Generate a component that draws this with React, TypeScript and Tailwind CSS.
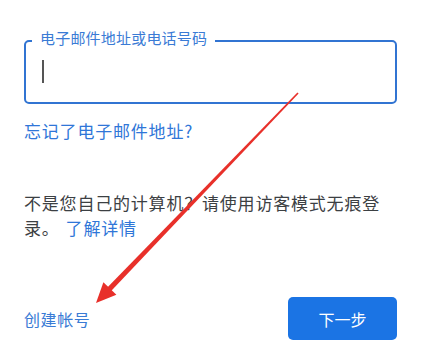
import React from 'react';

const font = { fontFamily: '"Noto Sans CJK SC", "Noto Sans", sans-serif' };

function Arrow() {
  // red annotation arrow drawn over the form
  const top = [298, 93];
  const tip = [96, 303];
  const dx = top[0] - tip[0];
  const dy = top[1] - tip[1];
  const len = Math.hypot(dx, dy);
  const u = [dx / len, dy / len];
  const n = [-u[1], u[0]];
  const headLen = 20;
  const headHalf = 9;
  const base = [tip[0] + u[0] * headLen, tip[1] + u[1] * headLen];
  const shaftEnd = [tip[0] + u[0] * (headLen - 2), tip[1] + u[1] * (headLen - 2)];
  const p = (x: number, y: number) => `${x.toFixed(1)},${y.toFixed(1)}`;
  const shaft = [
    p(top[0] + n[0] * 0.8, top[1] + n[1] * 0.8),
    p(top[0] - n[0] * 0.8, top[1] - n[1] * 0.8),
    p(shaftEnd[0] - n[0] * 2.6, shaftEnd[1] - n[1] * 2.6),
    p(shaftEnd[0] + n[0] * 2.6, shaftEnd[1] + n[1] * 2.6),
  ].join(' ');
  const head = [
    p(tip[0], tip[1]),
    p(base[0] + n[0] * headHalf, base[1] + n[1] * headHalf),
    p(base[0] - n[0] * headHalf, base[1] - n[1] * headHalf),
  ].join(' ');
  return (
    <svg className="pointer-events-none absolute left-0 top-0" width="422" height="359" viewBox="0 0 422 359">
      <polygon points={shaft} fill="#e8302a" />
      <polygon points={head} fill="#e8302a" />
    </svg>
  );
}

export default function App() {
  return (
    <div className="relative h-[359px] w-[422px] overflow-hidden bg-white pl-6 pr-[25px] pt-[40px]" style={font}>
      <div className="relative h-[64px] rounded-[5px] border-2 border-[#3174d2]">
        <span className="absolute -top-[14px] left-[6px] bg-white px-[8px] text-[15px] leading-[20px] tracking-[0.2px] text-[#3a7bd5]">
          电子邮件地址或电话号码
        </span>
        <div className="pl-[16px] pt-[18px]">
          <div className="h-[23px] w-[1.5px] bg-[#555]" />
        </div>
      </div>

      <div className="mt-[15px] text-[17px] leading-[24px] tracking-[0.8px] text-[#2f76d8]">忘记了电子邮件地址?</div>

      <p className="mt-[47px] text-[17px] leading-[25px] tracking-[0.8px] text-[#3c4043]">
        不是您自己的计算机？请使用访客模式无痕登录。<span className="ml-[6px] text-[#2f76d8]">了解详情</span>
      </p>

      <div className="mt-[57px] flex items-center justify-between">
        <span className="text-[16px] leading-[22px] tracking-[0.6px] text-[#3a7bd5]">创建帐号</span>
        <button className="h-[43px] w-[109px] rounded-[5px] bg-[#1b74e4] text-[16px] text-white">下一步</button>
      </div>

      <Arrow />
    </div>
  );
}
